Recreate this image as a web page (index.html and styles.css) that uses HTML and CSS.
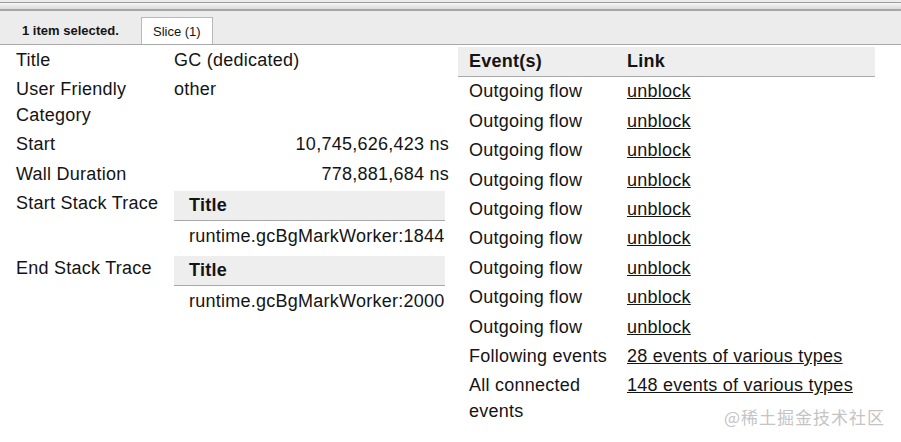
FILE: index.html
```html
<!DOCTYPE html>
<html>
<head>
<meta charset="utf-8">
<link rel="stylesheet" href="styles.css">
</head>
<body>
<div class="chrome"></div>
<div class="tabbar">
  <div class="selinfo">1 item selected.</div>
  <div class="tab">Slice (1)</div>
</div>
<div class="content">
  <div class="left">
    <div class="lbl">Title</div><div class="val">GC (dedicated)</div>
    <div class="lbl">User Friendly Category</div><div class="val">other</div>
    <div class="lbl">Start</div><div class="val num">10,745,626,423 ns</div>
    <div class="lbl">Wall Duration</div><div class="val num">778,881,684 ns</div>
    <div class="lbl">Start Stack Trace</div>
    <div class="val stackcell">
      <div class="stack">
        <div class="sh">Title</div>
        <div class="sr">runtime.gcBgMarkWorker:1844</div>
      </div>
    </div>
    <div class="lbl">End Stack Trace</div>
    <div class="val stackcell">
      <div class="stack">
        <div class="sh">Title</div>
        <div class="sr">runtime.gcBgMarkWorker:2000</div>
      </div>
    </div>
  </div>
  <div class="right">
    <div class="rh">Event(s)</div><div class="rh">Link</div>
    <div class="rc">Outgoing flow</div><div class="rc"><a>unblock</a></div>
    <div class="rc">Outgoing flow</div><div class="rc"><a>unblock</a></div>
    <div class="rc">Outgoing flow</div><div class="rc"><a>unblock</a></div>
    <div class="rc">Outgoing flow</div><div class="rc"><a>unblock</a></div>
    <div class="rc">Outgoing flow</div><div class="rc"><a>unblock</a></div>
    <div class="rc">Outgoing flow</div><div class="rc"><a>unblock</a></div>
    <div class="rc">Outgoing flow</div><div class="rc"><a>unblock</a></div>
    <div class="rc">Outgoing flow</div><div class="rc"><a>unblock</a></div>
    <div class="rc">Outgoing flow</div><div class="rc"><a>unblock</a></div>
    <div class="rc">Following events</div><div class="rc"><a>28 events of various types</a></div>
    <div class="rc">All connected events</div><div class="rc"><a>148 events of various types</a></div>
  </div>
</div>
<div class="watermark">@稀土掘金技术社区</div>
</body>
</html>
```
FILE: styles.css
```css
html, body {
  margin: 0;
  padding: 0;
  background: #fff;
}
body {
  font-family: "Liberation Sans", Arial, sans-serif;
  color: #141414;
  width: 901px;
  height: 442px;
  overflow: hidden;
  position: relative;
}
.chrome {
  height: 11px;
  background: linear-gradient(to bottom,
    #ececec 0px, #ececec 2px,
    #9c9c9c 2px, #9c9c9c 3px,
    #f6f6f6 3px, #dadada 9px,
    #a6a6a6 9px, #a6a6a6 11px);
}
.tabbar {
  height: 33px;
  background: #ececec;
  border-bottom: 1px solid #a9a9a9;
  display: flex;
  align-items: flex-end;
  font-size: 13px;
}
.selinfo {
  font-weight: bold;
  padding-left: 22px;
  width: 141px;
  box-sizing: border-box;
  align-self: center;
  margin-top: 6px;
}
.tab {
  height: 26px;
  line-height: 27px;
  padding: 0 11px;
  background: #fff;
  border: 1px solid #b8b8b8;
  border-bottom: none;
  box-sizing: content-box;
}
.content {
  display: flex;
  align-items: flex-start;
  font-size: 18px;
  line-height: 25.4px;
  letter-spacing: 0.25px;
  margin-top: 1px;
}
.left {
  margin-left: 16px;
  display: grid;
  grid-template-columns: 158px 275px;
}
.lbl, .val {
  padding: 2px 0;
}
.num {
  text-align: right;
}
.stackcell {
  padding: 2px 0;
}
.stack {
  width: 271px;
}
.sh {
  background: #eeeeee;
  font-weight: bold;
  padding: 2px 15px;
  border-bottom: 1px solid #a8a8a8;
}
.sr {
  padding: 3px 15px 2px;
}
.right {
  margin-left: 9px;
  margin-top: 1px;
  width: 417px;
  display: grid;
  grid-template-columns: 169px 248px;
}
.rh {
  background: #eeeeee;
  font-weight: bold;
  padding: 2px 0 2px 11px;
  border-bottom: 1px solid #a8a8a8;
}
.rh:nth-child(2), .rc:nth-child(2n) {
  padding-left: 0;
}
.rc {
  padding: 2px 0 2px 11px;
}
.rc a {
  color: #141414;
  text-decoration: underline;
}
.watermark {
  position: absolute;
  right: 16px;
  bottom: 13px;
  font-family: "Noto Sans CJK SC", sans-serif;
  font-size: 17px;
  line-height: 24px;
  color: #c4c4c4;
  letter-spacing: 1px;
}
```
